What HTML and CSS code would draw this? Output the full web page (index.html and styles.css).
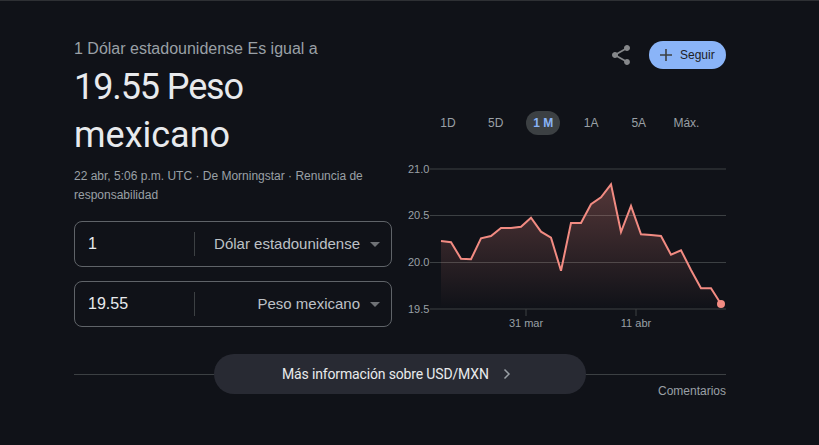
FILE: index.html
```html
<!DOCTYPE html>
<html lang="es">

<head>
    <meta charset="UTF-8">
    <meta name="viewport" content="width=device-width, initial-scale=1.0">
    <title>USD a MXN</title>
    <link rel="stylesheet" href="styles.css">
</head>

<body>
    <div class="wrapper">
        <div class="columns">
            <div class="converter">
                <p class="equals">1 Dólar estadounidense Es igual a</p>
                <h1 class="result">
                    <span class="value">19.55 Peso</span>
                    <span class="unit">mexicano</span>
                </h1>
                <p class="source">22 abr, 5:06 p.m. UTC · De Morningstar · Renuncia de responsabilidad</p>
                <div class="field">
                    <span class="amount">1</span>
                    <span class="currency">Dólar estadounidense</span>
                    <span class="arrow"></span>
                </div>
                <div class="field">
                    <span class="amount">19.55</span>
                    <span class="currency">Peso mexicano</span>
                    <span class="arrow"></span>
                </div>
            </div>
            <div class="market">
                <div class="actions">
                    <svg class="share" width="24" height="24" viewBox="0 0 24 24">
                        <path fill="#85878a" d="M18 16.08c-.76 0-1.44.3-1.96.77L8.91 12.7c.05-.23.09-.46.09-.7s-.04-.47-.09-.7l7.05-4.11c.54.5 1.25.81 2.04.81 1.66 0 3-1.34 3-3s-1.34-3-3-3-3 1.34-3 3c0 .24.04.47.09.7L8.04 9.81C7.5 9.31 6.79 9 6 9c-1.66 0-3 1.34-3 3s1.34 3 3 3c.79 0 1.5-.31 2.04-.81l7.12 4.16c-.05.21-.08.43-.08.65 0 1.61 1.31 2.92 2.92 2.92s2.92-1.31 2.92-2.92-1.31-2.92-2.92-2.92z"/>
                    </svg>
                    <button class="follow-btn">
                        <svg width="14" height="14" viewBox="0 0 14 14">
                            <path fill="#3c4043" d="M6.2 1h1.6v5.2H13v1.6H7.8V13H6.2V7.8H1V6.2h5.200z"/>
                        </svg>
                        Seguir
                    </button>
                </div>
                <div class="ranges">
                    <span class="range">1D</span>
                    <span class="range">5D</span>
                    <span class="range active">1 M</span>
                    <span class="range">1A</span>
                    <span class="range">5A</span>
                    <span class="range">Máx.</span>
                </div>
                <svg class="chart" width="318" height="174" viewBox="408 160 318 174">
                    <defs>
                        <linearGradient id="fade" x1="0" y1="0" x2="0" y2="1">
                            <stop offset="0" stop-color="#f28b82" stop-opacity="0.3"/>
                            <stop offset="1" stop-color="#f28b82" stop-opacity="0"/>
                        </linearGradient>
                    </defs>
                    <g class="grid">
                        <line x1="430" y1="169" x2="726" y2="169"/>
                        <line x1="430" y1="215.5" x2="726" y2="215.5"/>
                        <line x1="430" y1="262.5" x2="726" y2="262.5"/>
                        <line x1="430" y1="309" x2="726" y2="309"/>
                        <line x1="526" y1="309" x2="526" y2="316"/>
                        <line x1="636" y1="309" x2="636" y2="316"/>
                    </g>
                    <g class="y-label">
                        <text x="408" y="173">21.0</text>
                        <text x="408" y="219">20.5</text>
                        <text x="408" y="266">20.0</text>
                        <text x="408" y="313">19.5</text>
                    </g>
                    <g class="x-label">
                        <text x="526" y="327">31 mar</text>
                        <text x="636" y="327">11 abr</text>
                    </g>
                    <path fill="url(#fade)" d="M441 241L451 242.3L461 258.7L471 259.3L481 238.3L491 236L501 228L511 228L521 226.7L531 217.7L541 231.7L551 237.7L561 270.7L571 223L581 223L591 204.3L601 197.3L611 184.3L621 232L631 206L641 234.3L651 235L661 236L671 254.7L681 250.3L691 270L701 288.3L711 288.3L721 304V308H441Z"/>
                    <polyline class="line" points="441,241 451,242.3 461,258.7 471,259.3 481,238.3 491,236 501,228 511,228 521,226.7 531,217.7 541,231.7 551,237.7 561,270.7 571,223 581,223 591,204.3 601,197.3 611,184.3 621,232 631,206 641,234.3 651,235 661,236 671,254.7 681,250.3 691,270 701,288.3 711,288.3 721,304"/>
                    <circle cx="721" cy="304" r="4" fill="#f28b82"/>
                </svg>
            </div>
        </div>
        <div class="more">
            <button class="more-btn">
                Más información sobre USD/MXN
                <svg width="10" height="12" viewBox="0 0 10 12">
                    <path fill="none" stroke="#9aa0a6" stroke-width="1.5" d="M2.5 1.5L7 6L2.5 10.5"/>
                </svg>
            </button>
        </div>
        <div class="feedback">Comentarios</div>
    </div>
</body>

</html>
```

FILE: styles.css
```css
* {
    margin: 0;
    padding: 0;
    box-sizing: border-box;
}

body {
    background: #101218;
    border-top: 1px solid #2e3034;
    height: 445px;
    overflow: hidden;
    font-family: "Liberation Sans", Arial, sans-serif;
}

.wrapper {
    width: 652px;
    margin-left: 74px;
    padding-top: 39px;
}

.columns {
    display: grid;
    grid-template-columns: 318px 318px;
    column-gap: 16px;
}

.equals {
    font-size: 16px;
    line-height: 18px;
    color: #9aa0a6;
}

.result {
    font-family: Roboto, sans-serif;
    font-weight: 400;
    font-size: 36px;
    line-height: 48px;
    color: #e8eaed;
    margin-top: 5px;
}

.result span {
    display: block;
}

.result .value {
    letter-spacing: -1.1px;
}

.source {
    font-size: 12px;
    line-height: 19px;
    color: #9aa0a6;
    margin-top: 8px;
    height: 38px;
}

.field {
    display: flex;
    align-items: center;
    height: 46px;
    border: 1px solid #5f6368;
    border-radius: 8px;
    margin-top: 16px;
    padding: 0 11px 0 13px;
    font-size: 15px;
    color: #bdc1c6;
}

.field:last-child {
    margin-top: 14px;
}

.amount {
    width: 106px;
    line-height: 24px;
    color: #e8eaed;
    font-size: 16px;
}

.currency {
    flex: 1;
    text-align: right;
    border-left: 1px solid #3c4043;
    line-height: 24px;
}

.arrow {
    width: 0;
    height: 0;
    margin-left: 10px;
    border-left: 5px solid transparent;
    border-right: 5px solid transparent;
    border-top: 5px solid #6f7276;
}

.actions {
    display: flex;
    align-items: center;
    justify-content: flex-end;
    height: 28px;
    margin-top: 1px;
}

.share {
    margin-right: 16px;
}

.follow-btn {
    display: flex;
    align-items: center;
    gap: 7px;
    width: 77px;
    height: 28px;
    padding-left: 10px;
    border: none;
    border-radius: 14px;
    background: #8ab4f8;
    color: #202124;
    font-family: "Liberation Sans", Arial, sans-serif;
    font-size: 12px;
}

.ranges {
    display: flex;
    justify-content: flex-start;
    align-items: center;
    margin-top: 42px;
    padding-left: 23px;
    height: 24px;
}

.range {
    width: 34px;
    margin-right: 13.7px;
    text-align: center;
    font-size: 12px;
    line-height: 24px;
    color: #9aa0a6;
    white-space: nowrap;
}

.range.active {
    background: #3c4043;
    border-radius: 12px;
    color: #8ab4f8;
    font-weight: bold;
}

.chart {
    display: block;
    margin-top: 25px;
}

.grid line {
    stroke: #3c4043;
    stroke-width: 1;
}

.y-label text {
    fill: #9aa0a6;
    font-size: 11px;
}

.x-label text {
    fill: #9aa0a6;
    font-size: 11px;
    text-anchor: middle;
}

.line {
    fill: none;
    stroke: #f28b82;
    stroke-width: 2;
    stroke-linejoin: miter;
}

.more {
    display: flex;
    justify-content: center;
    align-items: center;
    height: 40px;
    margin-top: 20px;
    background: linear-gradient(#3c4043, #3c4043) center / 100% 1px no-repeat;
}

.more-btn {
    display: flex;
    align-items: center;
    gap: 13px;
    width: 372px;
    height: 40px;
    padding-left: 68px;
    border: none;
    border-radius: 20px;
    background: #282a33;
    color: #e8eaed;
    font-family: Roboto, sans-serif;
    font-size: 14px;
    letter-spacing: -0.15px;
}

.feedback {
    text-align: right;
    font-size: 12px;
    line-height: 14px;
    color: #9aa0a6;
    margin-top: -10px;
}
```
